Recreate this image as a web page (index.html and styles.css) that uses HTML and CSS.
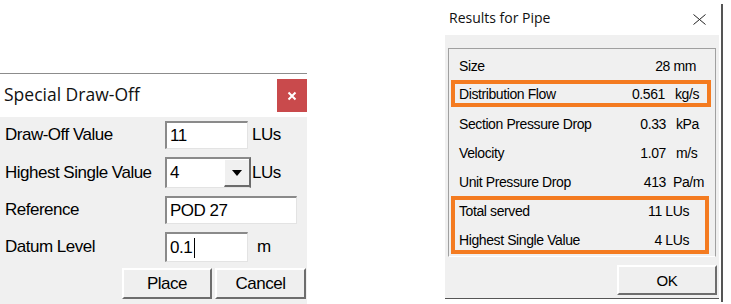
FILE: index.html
```html
<!DOCTYPE html>
<html lang="en">
<head>
    <meta charset="UTF-8">
    <title>Special Draw-Off / Results for Pipe</title>
    <link rel="stylesheet" href="styles.css">
</head>
<body>

<div class="screen">

    <!-- Special Draw-Off dialog -->
    <div class="draw-off">
        <div class="titlebar">
            <span class="title">Special Draw-Off</span>
            <span class="close-red">
                <svg width="10" height="10" viewBox="0 0 10 10">
                    <path d="M1.5 1.5 L8.5 8.5 M8.5 1.5 L1.5 8.5" stroke="#fff" stroke-width="2"/>
                </svg>
            </span>
        </div>
        <div class="draw-form">
            <div class="form-row r28">
                <span class="label">Draw-Off Value</span>
                <span class="field short">11</span>
                <span class="unit">LUs</span>
            </div>
            <div class="form-row r31">
                <span class="label">Highest Single Value</span>
                <span class="combo">
                    <span class="combo-value">4</span>
                    <span class="drop"><span class="arrow"></span></span>
                </span>
                <span class="unit tight">LUs</span>
            </div>
            <div class="form-row r28">
                <span class="label">Reference</span>
                <span class="field long">POD 27</span>
            </div>
            <div class="form-row r30">
                <span class="label">Datum Level</span>
                <span class="field short">0.1<span class="caret"></span></span>
                <span class="unit meter">m</span>
            </div>
            <div class="form-buttons">
                <button class="win-btn place">Place</button>
                <button class="win-btn cancel">Cancel</button>
            </div>
        </div>
    </div>

    <!-- Results for Pipe dialog -->
    <div class="results-wrap">
        <div class="results">
            <div class="results-title">
                <span class="title-small">Results for Pipe</span>
                <svg class="close-thin" width="13" height="11" viewBox="0 0 13 11">
                    <path d="M0.5 0.5 L12.5 10.5 M12.5 0.5 L0.5 10.5" stroke="#222" stroke-width="1"/>
                </svg>
            </div>
            <div class="results-body">
                <div class="panel">
                    <div class="row">
                        <span class="name">Size</span>
                        <span class="both pr-size">28 mm</span>
                    </div>
                    <div class="row hl">
                        <span class="name">Distribution Flow</span>
                        <span class="num">0.561</span>
                        <span class="u">kg/s</span>
                    </div>
                    <div class="row">
                        <span class="name">Section Pressure Drop</span>
                        <span class="num">0.33</span>
                        <span class="u">kPa</span>
                    </div>
                    <div class="row">
                        <span class="name">Velocity</span>
                        <span class="num">1.07</span>
                        <span class="u">m/s</span>
                    </div>
                    <div class="row">
                        <span class="name">Unit Pressure Drop</span>
                        <span class="num">413</span>
                        <span class="u pa">Pa/m</span>
                    </div>
                    <div class="hl-group">
                        <div class="row">
                            <span class="name">Total served</span>
                            <span class="both pr-lus">11 LUs</span>
                        </div>
                        <div class="row">
                            <span class="name">Highest Single Value</span>
                            <span class="both pr-lus">4 LUs</span>
                        </div>
                    </div>
                </div>
                <div class="ok-line">
                    <button class="win-btn ok">OK</button>
                </div>
            </div>
        </div>
        <div class="edge"></div>
    </div>

</div>

</body>
</html>
```

FILE: styles.css
```css
/* styles.css */
body {
    margin: 0;
    background: #fff;
    font-family: "Liberation Sans", Arial, sans-serif;
    color: #000;
}

.screen {
    display: flex;
    align-items: flex-start;
    width: 731px;
    height: 304px;
    overflow: hidden;
}

/* ---------- Special Draw-Off ---------- */

.draw-off {
    width: 307px;
    margin-top: 73px;
    border-top: 1px solid #8c8c8c;
}

.titlebar {
    height: 43px;
    background: #fff;
    display: flex;
    justify-content: space-between;
    align-items: flex-start;
}

.title {
    font-family: "Open Sans", "Liberation Sans", sans-serif;
    font-size: 17.5px;
    padding: 8px 0 0 4px;
    color: #111;
}

.close-red {
    width: 30px;
    height: 33px;
    margin-top: 5px;
    background: #c94a4c;
    display: flex;
    align-items: center;
    justify-content: center;
}

.draw-form {
    height: 187px;
    background: #f0f0f0;
    padding-top: 4px;
    box-sizing: border-box;
    font-size: 17px;
    letter-spacing: -0.5px;
}

.form-row {
    display: flex;
    align-items: stretch;
    margin-bottom: 8px;
}

.r28 { height: 28px; }
.r30 { height: 30px; }
.r31 { height: 31px; }

.label {
    width: 165px;
    flex-shrink: 0;
    align-self: center;
    padding-left: 5px;
    box-sizing: border-box;
    white-space: nowrap;
}

.field {
    box-sizing: border-box;
    background: #fff;
    border-top: 2px solid #8a8a8a;
    border-left: 2px solid #8a8a8a;
    border-right: 1px solid #e3e3e3;
    border-bottom: 1px solid #e3e3e3;
    padding-left: 3px;
    display: flex;
    align-items: center;
    white-space: nowrap;
}

.field.short { width: 83px; }
.field.long { width: 132px; }

.caret {
    display: inline-block;
    width: 1px;
    height: 20px;
    background: #000;
    margin-left: 2px;
}

.combo {
    box-sizing: border-box;
    width: 86px;
    background: #fff;
    border-top: 2px solid #8a8a8a;
    border-left: 2px solid #8a8a8a;
    border-right: 2px solid #6b6b6b;
    border-bottom: 1px solid #e3e3e3;
    display: flex;
}

.combo-value {
    flex: 1;
    padding-left: 3px;
    display: flex;
    align-items: center;
}

.drop {
    width: 24px;
    background: #f0f0f0;
    border-top: 1px solid #fff;
    border-left: 1px solid #fff;
    border-bottom: 2px solid #6b6b6b;
    display: flex;
    align-items: center;
    justify-content: center;
}

.arrow {
    width: 0;
    height: 0;
    border-left: 5px solid transparent;
    border-right: 5px solid transparent;
    border-top: 6px solid #000;
}

.unit {
    align-self: center;
    padding-left: 4px;
}

.unit.tight { padding-left: 1px; }
.unit.meter { padding-left: 9px; }

.form-buttons {
    display: flex;
    justify-content: flex-end;
    gap: 3px;
    padding-right: 1px;
    margin-top: -2px;
}

.win-btn {
    box-sizing: border-box;
    font-family: inherit;
    letter-spacing: inherit;
    color: #000;
    background: #efefef;
    border-top: 2px solid #fff;
    border-left: 2px solid #fff;
    border-right: 2px solid #6d6d6d;
    border-bottom: 2px solid #6d6d6d;
    padding: 0;
}

.place { width: 90px; height: 31px; font-size: 17px; }
.cancel { width: 91px; height: 31px; font-size: 17px; }

/* ---------- Results for Pipe ---------- */

.results-wrap {
    display: flex;
    margin-left: 138px;
}

.results {
    width: 274px;
}

.results-title {
    height: 35px;
    display: flex;
    justify-content: space-between;
    align-items: center;
    padding: 0 13px 0 4px;
}

.title-small {
    font-family: "Open Sans", "Liberation Sans", sans-serif;
    font-size: 14px;
    color: #111;
}

.close-thin {
    margin-top: 3px;
}

.results-body {
    height: 264px;
    box-sizing: border-box;
    background: #f0f0f0;
    border-bottom: 1px solid #555;
    padding-top: 13px;
    font-size: 14px;
    letter-spacing: -0.4px;
}

.panel {
    box-sizing: border-box;
    width: 268px;
    margin-left: 3px;
    border-top: 1px solid #a0a0a0;
    border-left: 1px solid #a0a0a0;
    border-right: 1px solid #a0a0a0;
    border-bottom: 1px solid #fff;
    padding: 2px 3px 2px 2px;
}

.row {
    height: 29px;
    display: grid;
    grid-template-columns: 1fr 60px 46px;
    align-items: center;
    white-space: nowrap;
}

.name { padding-left: 8px; }
.num { text-align: right; }
.u { padding-left: 10px; }
.u.pa { padding-left: 7px; }

.both {
    grid-column: 2 / 4;
    text-align: right;
}

.pr-size { padding-right: 16px; }
.pr-lus { padding-right: 20px; }

.hl {
    outline: 4px solid #f47b20;
    outline-offset: -4px;
    height: 27px;
    margin: 0 1px 2px 0;
}

.hl-group {
    outline: 4px solid #f47b20;
    outline-offset: -4px;
    margin-right: 3px;
}

.ok-line {
    display: flex;
    justify-content: flex-end;
    margin-top: 8px;
    padding-right: 2px;
}

.ok {
    width: 100px;
    height: 30px;
    font-size: 15px;
}

.edge {
    width: 2px;
    height: 298px;
    margin: 4px 0 0 2px;
    background: #555;
}
```
